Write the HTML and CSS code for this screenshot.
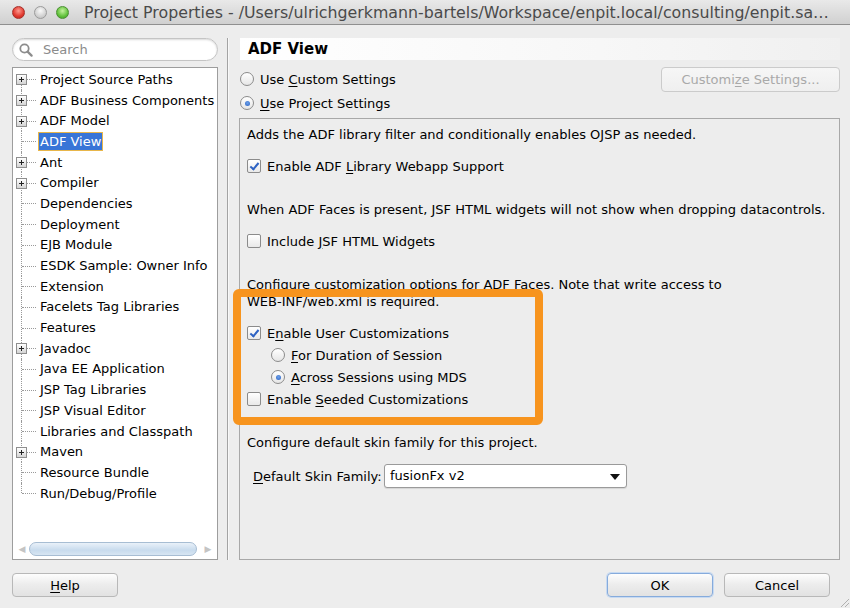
FILE: index.html
```html
<!DOCTYPE html>
<html lang="en">
<head>
  <meta charset="UTF-8" />
  <title>Project Properties</title>
  <link rel="stylesheet" href="styles.css">
</head>
<body>
<div class="window">

  <div class="titlebar">
    <span class="light red"></span>
    <span class="light grey"></span>
    <span class="light green"></span>
    <span class="title">Project Properties - /Users/ulrichgerkmann-bartels/Workspace/enpit.local/consulting/enpit.sa…</span>
  </div>

  <div class="content">
    <div class="nav">
      <div class="search">
        <svg class="glass" width="14" height="14" viewBox="0 0 14 14">
          <circle cx="5.5" cy="5.5" r="4.2" fill="none" stroke="#8c8c8c" stroke-width="1.8"/>
          <line x1="8.6" y1="8.6" x2="12.6" y2="12.6" stroke="#8c8c8c" stroke-width="2.2" stroke-linecap="round"/>
        </svg>
        <span class="placeholder">Search</span>
      </div>

      <div class="tree">
        <ul class="nodes">
          <li class="node first"><span class="twisty"><span class="plus"></span></span><span class="label">Project Source Paths</span></li>
          <li class="node"><span class="twisty"><span class="plus"></span></span><span class="label">ADF Business Components</span></li>
          <li class="node"><span class="twisty"><span class="plus"></span></span><span class="label">ADF Model</span></li>
          <li class="node"><span class="twisty"></span><span class="label selected">ADF View</span></li>
          <li class="node"><span class="twisty"><span class="plus"></span></span><span class="label">Ant</span></li>
          <li class="node"><span class="twisty"><span class="plus"></span></span><span class="label">Compiler</span></li>
          <li class="node"><span class="twisty"></span><span class="label">Dependencies</span></li>
          <li class="node"><span class="twisty"></span><span class="label">Deployment</span></li>
          <li class="node"><span class="twisty"></span><span class="label">EJB Module</span></li>
          <li class="node"><span class="twisty"></span><span class="label">ESDK Sample: Owner Info</span></li>
          <li class="node"><span class="twisty"></span><span class="label">Extension</span></li>
          <li class="node"><span class="twisty"></span><span class="label">Facelets Tag Libraries</span></li>
          <li class="node"><span class="twisty"></span><span class="label">Features</span></li>
          <li class="node"><span class="twisty"><span class="plus"></span></span><span class="label">Javadoc</span></li>
          <li class="node"><span class="twisty"></span><span class="label">Java EE Application</span></li>
          <li class="node"><span class="twisty"></span><span class="label">JSP Tag Libraries</span></li>
          <li class="node"><span class="twisty"></span><span class="label">JSP Visual Editor</span></li>
          <li class="node"><span class="twisty"></span><span class="label">Libraries and Classpath</span></li>
          <li class="node"><span class="twisty"><span class="plus"></span></span><span class="label">Maven</span></li>
          <li class="node"><span class="twisty"></span><span class="label">Resource Bundle</span></li>
          <li class="node last"><span class="twisty"></span><span class="label">Run/Debug/Profile</span></li>
        </ul>
        <div class="hscroll">
          <span class="arrow">&#9664;</span>
          <span class="thumb"></span>
          <span class="arrow">&#9654;</span>
        </div>
      </div>
    </div>

    <div class="split"></div>

    <div class="panel">
      <div class="panel-head">ADF View</div>

      <div class="choice top">
        <span class="radio"></span>
        <span>Use <u>C</u>ustom Settings</span>
        <button class="customize" disabled>Customi<u>z</u>e Settings...</button>
      </div>
      <div class="choice">
        <span class="radio on"></span>
        <span><u>U</u>se Project Settings</span>
      </div>

      <div class="settings">
        <p class="para first">Adds the ADF library filter and conditionally enables OJSP as needed.</p>
        <div class="opt gap"><span class="check on"></span><span>Enable ADF <u>L</u>ibrary Webapp Support</span></div>

        <p class="para">When ADF Faces is present, JSF HTML widgets will not show when dropping datacontrols.</p>
        <div class="opt gap"><span class="check"></span><span>Include <u>J</u>SF HTML Widgets</span></div>

        <p class="para">Configure customization options for ADF Faces. Note that write access to<br>WEB-INF/web.xml is required.</p>
        <div class="opt gap"><span class="check on"></span><span>E<u>n</u>able User Customizations</span></div>
        <div class="opt sub"><span class="radio"></span><span><u>F</u>or Duration of Session</span></div>
        <div class="opt sub"><span class="radio on"></span><span><u>A</u>cross Sessions using MDS</span></div>
        <div class="opt"><span class="check"></span><span>Enable <u>S</u>eeded Customizations</span></div>

        <p class="para">Configure default skin family for this project.</p>
        <div class="skin-row">
          <label><u>D</u>efault Skin Family:</label>
          <div class="select">fusionFx v2<span class="caret"></span></div>
        </div>
      </div>
    </div>
  </div>

  <div class="footer">
    <button class="btn"><u>H</u>elp</button>
    <span class="spacer"></span>
    <button class="btn default">OK</button>
    <button class="btn">Cancel</button>
  </div>

  <!-- highlight drawn over the screenshot -->
  <div class="callout"></div>

  <svg class="grip" width="12" height="12" viewBox="0 0 12 12">
    <line x1="11" y1="3" x2="3" y2="11" stroke="#b0b0b0"/>
    <line x1="11" y1="7" x2="7" y2="11" stroke="#b0b0b0"/>
  </svg>
</div>
</body>
</html>
```

FILE: styles.css
```css
body {
  margin: 0;
  padding: 0;
  font-family: "DejaVu Sans", "Liberation Sans", sans-serif;
  font-size: 13px;
  color: #000;
  background-color: #ededed;
}

.window {
  position: relative;
  width: 850px;
  height: 608px;
  overflow: hidden;
  background-color: #ededed;
}

u {
  text-decoration: underline;
  text-underline-offset: 2px;
}

/* title bar */

.titlebar {
  height: 24px;
  display: flex;
  align-items: center;
  padding-left: 12px;
  background: linear-gradient(#e9e9e9, #d0d0d0);
  border-bottom: 1px solid #8f8f8f;
}

.light {
  width: 13px;
  height: 13px;
  border-radius: 50%;
  margin-right: 9px;
  box-sizing: border-box;
}

.light.red {
  background: radial-gradient(circle at 50% 35%, #ff9a8f, #e0392f 60%, #b8231c);
  border: 1px solid #a6302a;
}

.light.grey {
  background: radial-gradient(circle at 50% 35%, #fafafa, #d2d2d2 60%, #b9b9b9);
  border: 1px solid #9b9b9b;
}

.light.green {
  background: radial-gradient(circle at 50% 35%, #c5f29f, #62c23c 60%, #3d9624);
  border: 1px solid #4a8f32;
}

.title {
  margin-left: 6px;
  font-size: 15.8px;
  color: #4a4a4a;
  white-space: nowrap;
}

/* main area */

.content {
  display: flex;
  height: 522px;
  padding-top: 13px;
}

.nav {
  width: 206px;
  margin-left: 12px;
  display: flex;
  flex-direction: column;
}

.search {
  height: 23px;
  box-sizing: border-box;
  border: 1px solid #c4c4c4;
  border-radius: 12px;
  background: #fff;
  box-shadow: inset 0 1px 2px rgba(0,0,0,0.15);
  display: flex;
  align-items: center;
  padding-left: 6px;
}

.glass {
  margin-right: 10px;
}

.placeholder {
  color: #8b8b8b;
  font-size: 13px;
}

.tree {
  flex: 1;
  margin-top: 6px;
  background: #fff;
  border: 1px solid #9d9d9d;
  display: flex;
  flex-direction: column;
}

.nodes {
  list-style: none;
  margin: 0;
  padding: 1px 0 0 0;
  flex: 1;
}

.node {
  height: 20.7px;
  display: flex;
  align-items: center;
  white-space: nowrap;
}

.twisty {
  position: relative;
  width: 25px;
  height: 100%;
  flex: none;
}

.twisty::before {
  content: "";
  position: absolute;
  left: 8px;
  top: 0;
  bottom: 0;
  border-left: 1px dotted #9a9a9a;
}

.node.first .twisty::before {
  top: 50%;
}

.node.last .twisty::before {
  bottom: 50%;
}

.twisty::after {
  content: "";
  position: absolute;
  left: 9px;
  width: 14px;
  top: 50%;
  border-top: 1px dotted #9a9a9a;
}

.plus {
  position: absolute;
  z-index: 1;
  left: 3px;
  top: 50%;
  margin-top: -5px;
  width: 11px;
  height: 11px;
  box-sizing: border-box;
  border: 1px solid #8e8e8e;
  background: linear-gradient(#ffffff, #d4d4d4);
}

.plus::before,
.plus::after {
  content: "";
  position: absolute;
  background: #222;
}

.plus::before {
  left: 2px;
  right: 2px;
  top: 4px;
  height: 1px;
}

.plus::after {
  top: 2px;
  bottom: 2px;
  left: 4px;
  width: 1px;
}

.label {
  padding: 1px 1px;
  border: 1px solid transparent;
}

.label.selected {
  background: #3875d7;
  border-color: #e8b64a;
  color: #fff;
}

.hscroll {
  height: 15px;
  margin-bottom: 3px;
  display: flex;
  align-items: center;
  padding: 0 3px;
}

.arrow {
  font-size: 9px;
  color: #c4c4c4;
  width: 12px;
  text-align: center;
}

.thumb {
  flex: none;
  width: 166px;
  height: 12px;
  margin: 0 0 0 1px;
  border-radius: 7px;
  border: 1px solid #a7bdd3;
  background: linear-gradient(#e9f1f9, #c8dbed 60%, #d7e5f2);
}

.hscroll .arrow:last-child {
  margin-left: auto;
}

.split {
  width: 1px;
  margin-left: 9px;
  background: #a3a3a3;
  box-shadow: 1px 0 0 #f8f8f8;
}

.panel {
  width: 601px;
  margin-left: 11px;
  display: flex;
  flex-direction: column;
}

.panel-head {
  height: 22px;
  line-height: 22px;
  margin-left: 1px;
  padding-left: 8px;
  font-size: 15px;
  font-weight: bold;
  background: linear-gradient(90deg, #ffffff, #f7f7f7 60%, #f0f0f0);
}

.choice {
  height: 24px;
  display: flex;
  align-items: center;
  padding-left: 1px;
}

.choice.top {
  margin-top: 7px;
}

.customize {
  margin-left: auto;
  height: 25px;
  width: 179px;
  border: 1px solid #cbcbcb;
  border-radius: 4px;
  background: linear-gradient(#f6f6f6, #efefef);
  color: #a9a9a9;
  font-family: inherit;
  font-size: 13px;
  margin-top: 1px;
}

.radio {
  width: 14px;
  height: 14px;
  box-sizing: border-box;
  border-radius: 50%;
  border: 1px solid #8b8b8b;
  background: linear-gradient(#ffffff, #e6e6e6);
  margin-right: 6px;
  position: relative;
  flex: none;
}

.radio.on::after {
  content: "";
  position: absolute;
  left: 3.5px;
  top: 3.5px;
  width: 5px;
  height: 5px;
  border-radius: 50%;
  background: radial-gradient(circle at 50% 40%, #6da3ec, #2a5fc0);
}

.check {
  width: 14px;
  height: 14px;
  box-sizing: border-box;
  border: 1px solid #8b8b8b;
  border-radius: 2px;
  background: linear-gradient(#ffffff, #e9e9e9);
  margin-right: 6px;
  position: relative;
  flex: none;
}

.check.on::after {
  content: "";
  position: absolute;
  left: 4px;
  top: 1px;
  width: 3px;
  height: 7px;
  border-right: 2px solid #2d62c3;
  border-bottom: 2px solid #2d62c3;
  transform: rotate(40deg);
}

.settings {
  flex: 1;
  margin-top: 3px;
  border: 1px solid #a8a8a8;
  padding: 7px 0 0 7px;
}

.para {
  margin: 24px 0 0 0;
  line-height: 17px;
}

.para.first {
  margin-top: 0;
}

.opt {
  height: 22px;
  display: flex;
  align-items: center;
}

.opt.gap {
  margin-top: 12px;
}

.opt.sub {
  padding-left: 24px;
}

.skin-row {
  margin-top: 13px;
  height: 24px;
  display: flex;
  align-items: center;
  padding-left: 6px;
}

.skin-row label {
  width: 131px;
}

.select {
  position: relative;
  width: 243px;
  height: 24px;
  box-sizing: border-box;
  border: 1px solid #9a9a9a;
  border-radius: 3px;
  background: #fff;
  box-shadow: 0 1px 1px rgba(0,0,0,0.1);
  padding-left: 5px;
  line-height: 22px;
}

.caret {
  position: absolute;
  right: 6px;
  top: 9px;
  border-left: 5px solid transparent;
  border-right: 5px solid transparent;
  border-top: 6px solid #111;
}

/* buttons */

.footer {
  display: flex;
  padding: 13px 20px 0 12px;
}

.spacer {
  flex: 1;
}

.btn {
  width: 106px;
  height: 24px;
  border: 1px solid #b8b8b8;
  border-radius: 4px;
  background: linear-gradient(#fdfdfd, #ececec 50%, #e2e2e2);
  font-family: inherit;
  font-size: 13px;
  color: #000;
  padding: 0;
}

.btn.default {
  border-color: #86abdc;
  margin-right: 11px;
  box-shadow: 0 0 0 1px #c7daf2;
}

.callout {
  position: absolute;
  left: 233px;
  top: 289px;
  width: 310px;
  height: 136px;
  box-sizing: border-box;
  border: 8px solid #f7941e;
  border-radius: 6px;
  z-index: 5;
}

.grip {
  position: absolute;
  right: 0;
  bottom: 0;
}
```
